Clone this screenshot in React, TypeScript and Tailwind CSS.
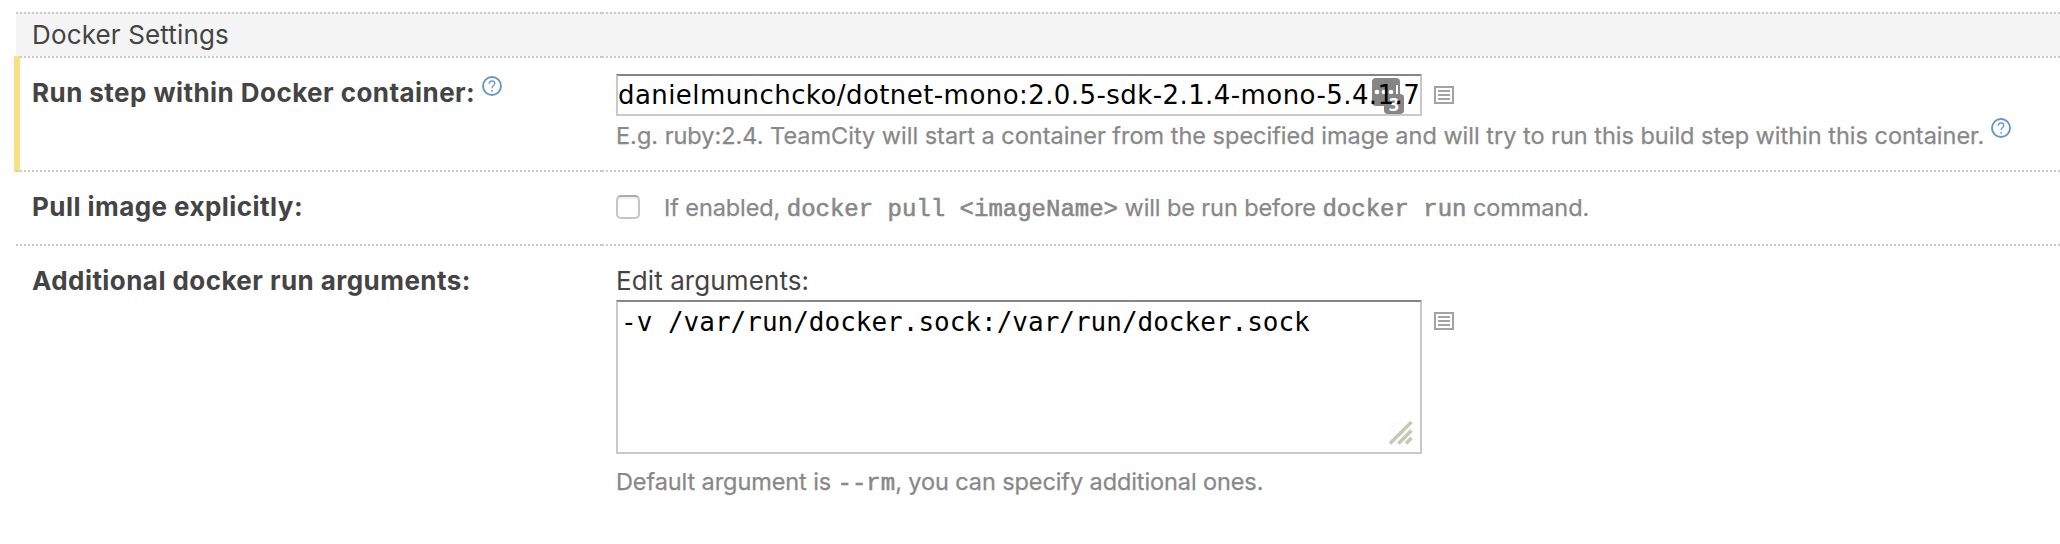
import type { ReactNode } from "react";

function HelpIcon() {
  return (
    <svg width="20" height="20" viewBox="0 0 20 20" fill="none" className="block shrink-0">
      <circle cx="10" cy="10" r="9" stroke="#6695ca" strokeWidth="1.9" />
      <path d="M7.2 7.7C7.2 6 8.3 5 10 5s2.8 1 2.8 2.5c0 2-2.7 2.2-2.7 4.7" stroke="#6f9dd0" strokeWidth="1.4" />
      <path d="M10.1 14v1.7" stroke="#6f9dd0" strokeWidth="1.6" />
    </svg>
  );
}

function ListIcon() {
  return (
    <svg width="20" height="18" viewBox="0 0 20 18" fill="none" stroke="#a3a3a3" strokeWidth="2" className="block shrink-0">
      <path d="M1 1h18v16H1zM4 5h12M4 9h12M4 13h12" />
    </svg>
  );
}

function FieldBadge() {
  return (
    <svg width="32" height="36" viewBox="0 0 32 36" className="absolute top-[2px] left-[754px]">
      <rect width="28" height="28" rx="4" fill="#858585" />
      <circle cx="5" cy="14" r="2.3" fill="#fff" />
      <circle cx="12" cy="14" r="2.3" fill="#fff" />
      <circle cx="19" cy="14" r="2.3" fill="#fff" />
      <path d="M25 7v9" stroke="#fff" strokeWidth="2" />
      <rect x="12" y="16" width="20" height="20" rx="4" fill="#858585" />
      <text x="22" y="33" fill="#fff" fontSize="18" fontWeight="700" textAnchor="middle" fontFamily="Open Sans, sans-serif">3</text>
    </svg>
  );
}

function Grip() {
  return (
    <svg width="24" height="24" viewBox="0 0 24 24" className="absolute right-[7px] bottom-[7px]">
      <rect x="1" y="1" width="23" height="23" fill="#fafafa" opacity="0.6" />
      <path d="M1 22.5L22.5 1M9.500 22.500L22.500 9.500M17 22.500L22.500 17" stroke="#c6c8b4" strokeWidth="3.4" />
    </svg>
  );
}

function Row({ className, label, children }: { className: string; label: ReactNode; children?: ReactNode }) {
  return (
    <div className={`relative flex ${className}`}>
      <div className="flex w-[586px] shrink-0 items-start border-t-2 border-dotted border-[#cacaca] pl-4">{label}</div>
      <div className="min-w-0 flex-1 border-t-2 border-dotted border-[#cacaca] pl-[14px]">{children}</div>
    </div>
  );
}

const label = "text-[26px] leading-8 font-bold tracking-[0.44px] whitespace-nowrap";
const hint = "text-[23.5px] leading-8 text-[#888] whitespace-nowrap [-webkit-text-stroke:0.25px_#888]";
const code = "font-['Liberation_Mono',monospace] text-[24px] leading-none tracking-normal [-webkit-text-stroke:0.6px_#888]";
const box = "relative w-[806px] border-2 border-[#c9c9c9] border-t-[#858585] bg-white text-[26px] text-black";

export default function App() {
  return (
    <div className="h-[544px] w-[2060px] overflow-hidden bg-white pt-3 pl-4 font-['Inter',sans-serif] text-[#444]">
      <Row
        className="h-11 bg-[#f4f4f4]"
        label={<span className="pt-[5px] text-[26px] leading-8 tracking-[0.15px]">Docker Settings</span>}
      />

      <Row
        className="h-[114px]"
        label={
          <>
            <span className="absolute top-0 left-[-2px] h-[116px] w-[6px] bg-[#f8e083]" />
            <span className={`pt-[19px] ${label}`}>Run step within Docker container:</span>
            <span className="mt-[18px] ml-[7px]"><HelpIcon /></span>
          </>
        }
      >
        <div className="flex items-start pt-4">
          <div className={`h-[42px] font-['DejaVu_Sans',sans-serif] leading-[38px] tracking-[0.43px] whitespace-nowrap ${box}`}>
            <FieldBadge />
            <span className="relative">danielmunchcko/dotnet-mono:2.0.5-sdk-2.1.4-mono-5.4.1.7</span>
          </div>
          <span className="mt-3 ml-3"><ListIcon /></span>
        </div>
        <div className={`flex items-start pt-[4px] ${hint}`}>
          <span className="tracking-[-0.01px]">E.g. ruby:2.4. TeamCity will start a container from the specified image and will try to run this build step within this container.</span>
          <span className="-mt-[2px] ml-[7px]"><HelpIcon /></span>
        </div>
      </Row>

      <Row className="h-[74px]" label={<span className={`pt-[19px] ${label}`}>Pull image explicitly:</span>}>
        <div className="flex items-start pt-5">
          <span className="mt-[3px] mr-6 h-6 w-6 rounded-[5px] border-2 border-[#c6c6c6] border-t-[#ababab] bg-white shadow-[inset_0_2px_2px_#eeeeee]" />
          <span className={`tracking-[-0.1px] ${hint}`}>
            If enabled, <code className={code}>docker pull &lt;imageName&gt;</code> will be run before <code className={code}>docker run</code> command.
          </span>
        </div>
      </Row>

      <Row className="h-[298px]" label={<span className={`pt-[19px] ${label}`}>Additional docker run arguments:</span>}>
        <div className="pt-[19px] text-[26px] leading-8 tracking-[0.1px]">Edit arguments:</div>
        <div className="mt-[3px] flex items-start">
          <div className={`h-[154px] pt-1 pl-[3px] font-['DejaVu_Sans_Mono',monospace] leading-8 ${box}`}>
            -v /var/run/docker.sock:/var/run/docker.sock
            <Grip />
          </div>
          <span className="mt-3 ml-3"><ListIcon /></span>
        </div>
        <div className={`pt-3 tracking-[-0.1px] ${hint}`}>
          Default argument is <code className={code}>--rm</code>, you can specify additional ones.
        </div>
      </Row>
    </div>
  );
}
